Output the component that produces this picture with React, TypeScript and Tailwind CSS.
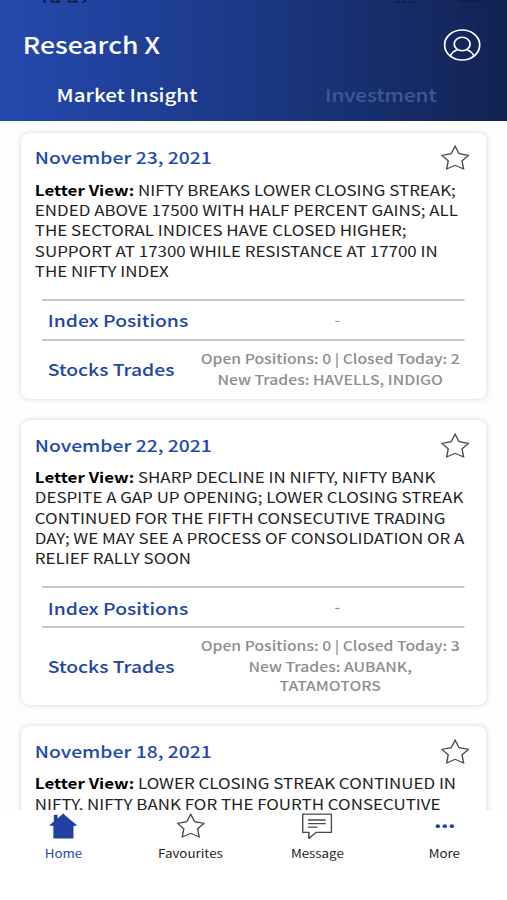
import { Fragment } from "react";

type Insight = {
  date: string;
  view: string[];
  indexPositions: string;
  openPositions: number;
  closedToday: number;
  newTrades: string[];
};

const insights: Insight[] = [
  {
    date: "November 23, 2021",
    view: [
      "NIFTY BREAKS LOWER CLOSING STREAK;",
      "ENDED ABOVE 17500 WITH HALF PERCENT GAINS; ALL",
      "THE SECTORAL INDICES HAVE CLOSED HIGHER;",
      "SUPPORT AT 17300 WHILE RESISTANCE AT 17700 IN",
      "THE NIFTY INDEX",
    ],
    indexPositions: "-",
    openPositions: 0,
    closedToday: 2,
    newTrades: ["HAVELLS, INDIGO"],
  },
  {
    date: "November 22, 2021",
    view: [
      "SHARP DECLINE IN NIFTY, NIFTY BANK",
      "DESPITE A GAP UP OPENING; LOWER CLOSING STREAK",
      "CONTINUED FOR THE FIFTH CONSECUTIVE TRADING",
      "DAY; WE MAY SEE A PROCESS OF CONSOLIDATION OR A",
      "RELIEF RALLY SOON",
    ],
    indexPositions: "-",
    openPositions: 0,
    closedToday: 3,
    newTrades: ["AUBANK,", "TATAMOTORS"],
  },
  {
    date: "November 18, 2021",
    view: ["LOWER CLOSING STREAK CONTINUED IN", "NIFTY, NIFTY BANK FOR THE FOURTH CONSECUTIVE"],
    indexPositions: "-",
    openPositions: 0,
    closedToday: 0,
    newTrades: [],
  },
];

function StarIcon() {
  return (
    <svg viewBox="0 0 24 26" className="h-[26px] w-6" fill="none" stroke="#4a4a4a" strokeWidth="1.2">
      <path d="M12 1.2 15.4 8.7 23.4 10.4 17.9 15.7 19.2 24 12 20.3 4.8 24 6.1 15.7 .6 10.4 8.6 8.7Z" />
    </svg>
  );
}

function ProfileIcon() {
  return (
    <svg viewBox="0 0 32 32" className="h-8 w-8" fill="none" stroke="#ffffff" strokeWidth="1.5">
      <circle cx="16" cy="16" r="15" />
      <circle cx="16" cy="15" r="6.8" />
      <path d="M6 26.8C7.2 24 9.2 21.8 12 20.6M26 26.8C24.8 24 22.8 21.8 20 20.6" />
    </svg>
  );
}

function HomeIcon() {
  return (
    <svg viewBox="0 0 24 26" className="h-[26px] w-6" fill="#1f42a0">
      <path d="M12 .6 15.8 4.4 24 12.6 20.8 13V25.4H3.6V13L0 12.6 4 8.6V1.8H7.2V5.4Z" />
    </svg>
  );
}

function MessageIcon() {
  return (
    <svg viewBox="0 0 26 26" className="h-[26px] w-[26px]" fill="none" stroke="#4a4a4a" strokeWidth="1.3">
      <path d="M.7 1.2H25.3V19.4H12.2L6 25.4V19.4H.7Z" />
      <path d="M5.2 7H20.4M5.2 10.6H20.4M5.2 14.2H13.4" />
    </svg>
  );
}

function MoreIcon() {
  return (
    <svg viewBox="0 0 24 26" className="h-[26px] w-6" fill="#1f42a0">
      <circle cx="6.2" cy="13.2" r="1.9" />
      <circle cx="12.2" cy="13.2" r="1.9" />
      <circle cx="18.2" cy="13.2" r="1.9" />
    </svg>
  );
}

const navItems = [
  { label: "Home", icon: HomeIcon, active: true },
  { label: "Favourites", icon: StarIcon },
  { label: "Message", icon: MessageIcon },
  { label: "More", icon: MoreIcon },
];

function StatusBar() {
  return (
    <div className="flex h-[3px] items-end justify-between overflow-hidden pr-[22px] pl-[33px] text-[#0f1d48]">
      <span className="-mb-[6px] text-[17px] leading-[20px] font-medium">14:42</span>
      <div className="flex items-end">
        <div className="mr-4 flex gap-[2px]">
          <span className="h-[2px] w-[3px] bg-current" />
          <span className="h-[2px] w-[3px] bg-current" />
          <span className="h-[2px] w-[3px] bg-current" />
          <span className="h-[2px] w-[3px] bg-current" />
        </div>
        <span className="mr-4 h-px w-[2px] bg-current" />
        <span className="mb-px h-[2px] w-[21px] rounded-b-sm bg-current" />
      </div>
    </div>
  );
}

function Header() {
  return (
    <header className="h-[121px] shrink-0 bg-linear-to-r from-[#254aaf] via-[#1b3885] to-[#122353] text-white">
      <StatusBar />
      <div className="flex h-[84px] items-center justify-between pr-[23.5px] pl-[19.5px]">
        <h1 className="text-[22.7px] leading-7 font-medium">Research X</h1>
        <ProfileIcon />
      </div>
      <div className="-mt-[4px] grid grid-cols-2 text-center text-[17.6px] leading-6 font-medium">
        <span>Market Insight</span>
        <span className="text-[#3a5b96]">Investment</span>
      </div>
    </header>
  );
}

function InsightCard({ item }: { item: Insight }) {
  return (
    <article className="rounded-lg bg-white px-3 shadow-[0_0_5px_rgba(0,0,0,0.17)]">
      <div className="flex h-[47px] justify-between pt-[12.5px] pr-[2.5px]">
        <h2 className="text-[16.5px] leading-6 font-medium text-[#2348ab]">{item.date}</h2>
        <StarIcon />
      </div>
      <p className="text-[14.47px] leading-[20.25px] whitespace-nowrap text-[#222]">
        <b className="font-bold text-black">Letter View:</b>{" "}
        {item.view.map((line) => (
          <Fragment key={line}>
            {line}
            <br />
          </Fragment>
        ))}
      </p>
      <div className="mt-[18px] mr-[7px] ml-[6px]">
        <div className="flex h-10 items-center border-t-2 border-[#c6c6c6] pl-[5px]">
          <h3 className="w-[133px] pt-[1.5px] text-[16.5px] font-medium text-[#2145a5]">Index Positions</h3>
          <span className="flex-1 pb-[1.5px] pl-[6px] text-center text-[13.4px] font-medium text-[#8e8e8e]">
            {item.indexPositions}
          </span>
        </div>
        <div className="flex items-center border-t-2 border-[#c6c6c6] pt-[7.5px] pb-[10px] pl-[5px]">
          <h3 className="w-[127px] pt-px text-[16.5px] font-medium text-[#2145a5]">Stocks Trades</h3>
          <div className="flex-1 text-center text-[13.45px] leading-[19px] font-medium whitespace-nowrap text-[#8e8e8e]">
            <p className="mb-[2.5px]">
              Open Positions: {item.openPositions} | Closed Today: {item.closedToday}
            </p>
            <p>
              New Trades:{" "}
              {item.newTrades.map((trade, i) => (
                <Fragment key={trade}>
                  {i > 0 && <br />}
                  {trade}
                </Fragment>
              ))}
            </p>
          </div>
        </div>
      </div>
    </article>
  );
}

function BottomNav() {
  return (
    <nav className="grid h-[90.5px] shrink-0 grid-cols-4 content-start bg-white pt-[3px]">
      {navItems.map(({ label, icon: Icon, active }) => (
        <div key={label} className="flex flex-col items-center gap-[4px]">
          <Icon />
          <span className={active ? "text-[11.4px] leading-5 text-[#2348ab]" : "text-[11.4px] leading-5 text-[#222]"}>{label}</span>
        </div>
      ))}
    </nav>
  );
}

export default function App() {
  return (
    <div className="h-[900px] w-[507px] overflow-hidden">
      {/* 433px wide screen stretched to the full window width */}
      <div className="flex h-full w-[434px] origin-left scale-x-[1.17] flex-col bg-[#fdfdfd] font-['Noto_Sans_CJK_JP',sans-serif]">
        <Header />
        <main className="flex min-h-0 flex-1 flex-col gap-[21px] overflow-hidden pt-[11.8px] pr-[18.3px] pl-[17.8px]">
          {insights.map((item) => (
            <InsightCard key={item.date} item={item} />
          ))}
        </main>
        <BottomNav />
      </div>
    </div>
  );
}
